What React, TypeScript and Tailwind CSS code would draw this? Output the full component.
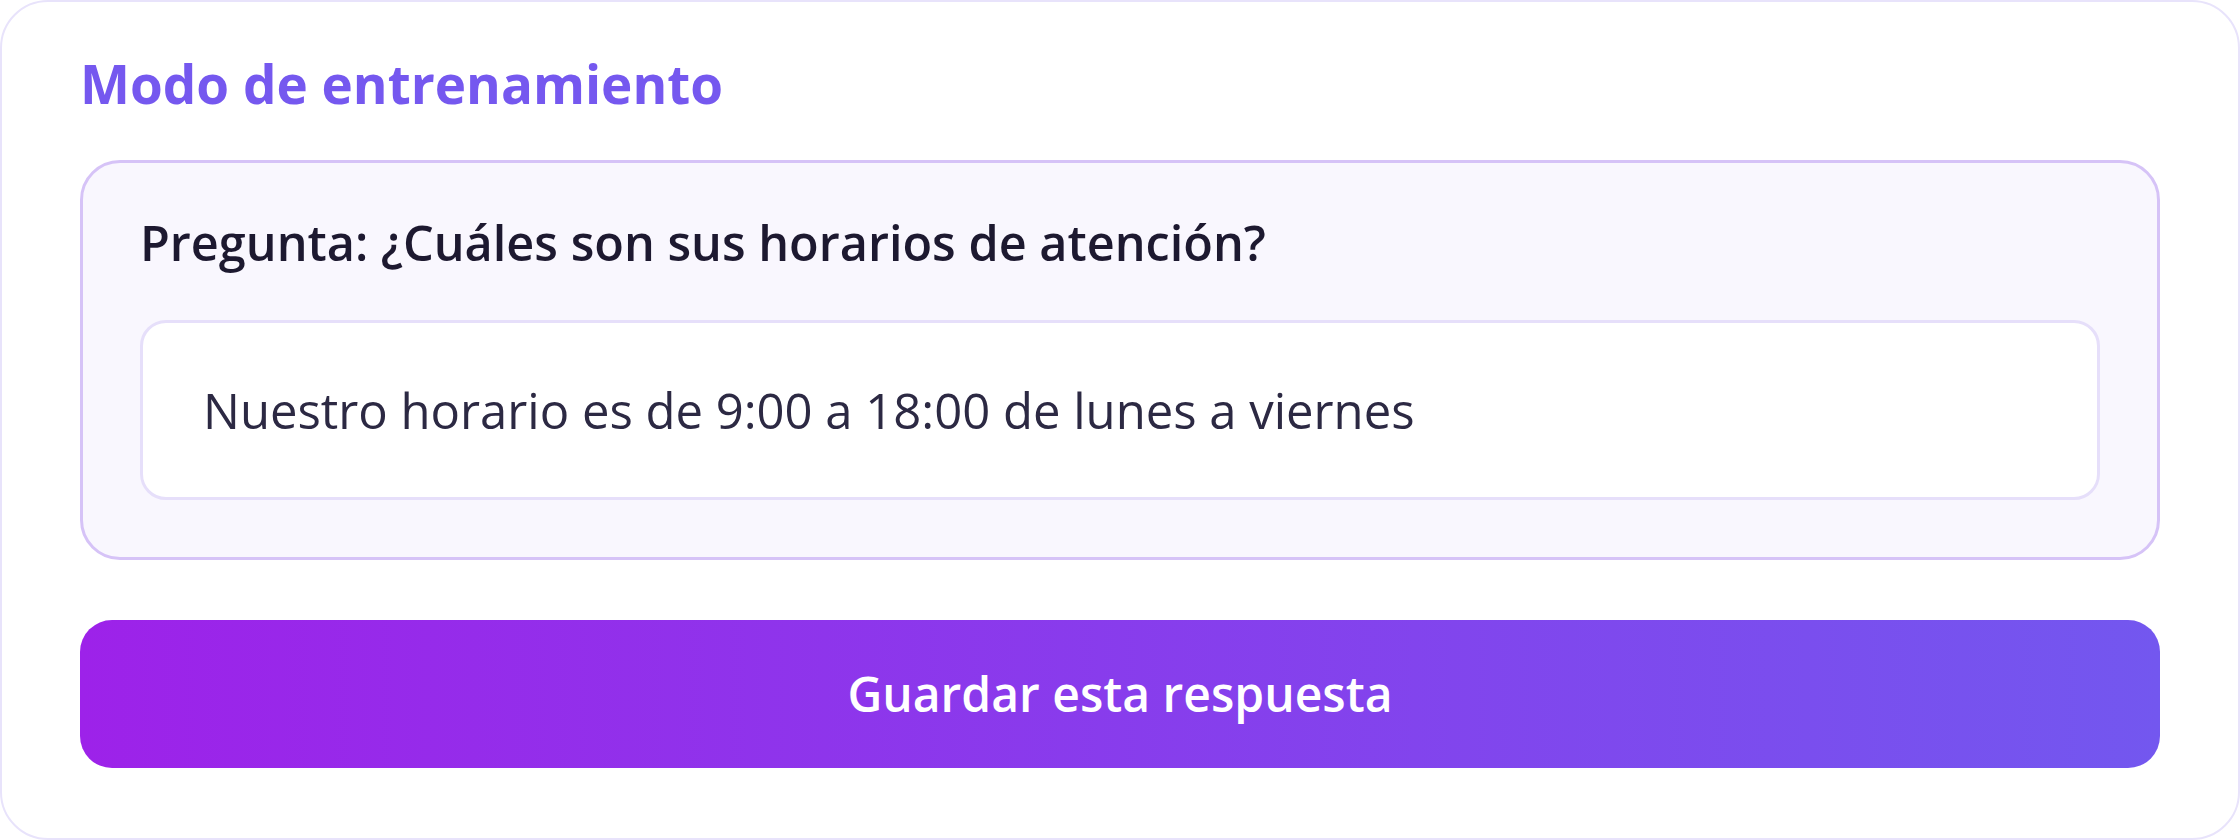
import React from 'react';

const font = { fontFamily: '"Open Sans", "Noto Sans", sans-serif' };

export default function App() {
  return (
    <div className="w-[2240px] h-[840px] bg-white" style={font}>
      <div className="box-border flex h-[840px] w-[2240px] flex-col rounded-[48px] border-2 border-[#e8e3fb] bg-white px-[78px] pt-[46px]">
        <h1 className="text-[53px] font-bold leading-[72px] text-[#7558ef]">Modo de entrenamiento</h1>

        <div className="mt-[40px] rounded-[40px] border-[3px] border-[#d6c3f7] bg-[#f9f7fe] px-[57px] pt-[49px] pb-[57px]">
          <h2 className="text-[48.6px] font-semibold leading-[60px] text-[#1d1930]">
            Pregunta: ¿Cuáles son sus horarios de atención?
          </h2>
          <div className="mt-[48px] flex h-[180px] items-center rounded-[26px] border-[3px] border-[#e6dffa] bg-white px-[60px]">
            <p className="text-[49px] font-normal leading-none text-[#2c2943]">
              Nuestro horario es de 9:00 a 18:00 de lunes a viernes
            </p>
          </div>
        </div>

        <button className="mt-[60px] flex h-[148px] w-full items-center justify-center rounded-[32px] bg-linear-to-r/srgb from-[#9d22e9] to-[#7357ef] text-[48px] font-semibold text-white">
          Guardar esta respuesta
        </button>
      </div>
    </div>
  );
}
